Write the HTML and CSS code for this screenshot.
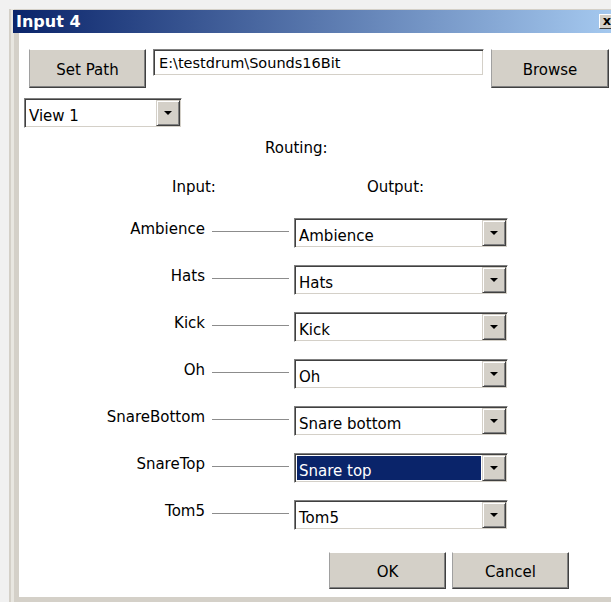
FILE: index.html
```html
<!DOCTYPE html>
<html>
<head>
<meta charset="utf-8">
<title>Input 4</title>
<link rel="stylesheet" href="styles.css">
</head>
<body>
<div class="window">
  <div class="titlebar">
    <span class="title">Input 4</span>
    <span class="close">x</span>
  </div>
  <div class="client">
    <div class="toolbar">
      <button class="btn">Set Path</button>
      <div class="field">E:\testdrum\Sounds16Bit</div>
      <button class="btn">Browse</button>
    </div>

    <div class="combo view">
      <span class="value">View 1</span>
      <span class="drop"><i class="arrow"></i></span>
    </div>

    <div class="heading">Routing:</div>

    <div class="cols">
      <span class="col-in">Input:</span>
      <span class="col-out">Output:</span>
    </div>

    <div class="routes">
      <div class="route">
        <span class="src">Ambience</span><span class="wire"></span>
        <div class="combo"><span class="value">Ambience</span><span class="drop"><i class="arrow"></i></span></div>
      </div>
      <div class="route">
        <span class="src">Hats</span><span class="wire"></span>
        <div class="combo"><span class="value">Hats</span><span class="drop"><i class="arrow"></i></span></div>
      </div>
      <div class="route">
        <span class="src">Kick</span><span class="wire"></span>
        <div class="combo"><span class="value">Kick</span><span class="drop"><i class="arrow"></i></span></div>
      </div>
      <div class="route">
        <span class="src">Oh</span><span class="wire"></span>
        <div class="combo"><span class="value">Oh</span><span class="drop"><i class="arrow"></i></span></div>
      </div>
      <div class="route">
        <span class="src">SnareBottom</span><span class="wire"></span>
        <div class="combo"><span class="value">Snare bottom</span><span class="drop"><i class="arrow"></i></span></div>
      </div>
      <div class="route">
        <span class="src">SnareTop</span><span class="wire"></span>
        <div class="combo focused"><span class="value">Snare top</span><span class="drop"><i class="arrow"></i></span></div>
      </div>
      <div class="route">
        <span class="src">Tom5</span><span class="wire"></span>
        <div class="combo"><span class="value">Tom5</span><span class="drop"><i class="arrow"></i></span></div>
      </div>
    </div>

    <div class="actions">
      <button class="btn action">OK</button>
      <button class="btn action">Cancel</button>
    </div>
  </div>
</div>
</body>
</html>
```
FILE: styles.css
```css
html, body {
  margin: 0;
  height: 100%;
  overflow: hidden;
}

body {
  background: #f1f1f1;
  font-family: "DejaVu Sans", "Liberation Sans", sans-serif;
  font-size: 15px;
  line-height: 17px;
  color: #000;
}

/* Classic window frame */
.window {
  margin: 9px 0 0 9px;
  width: 604px;
  padding: 1px 0 5px 4px;
  background: #d4d0c8;
  box-shadow: inset 2px 0 0 #d4d0c8, inset 5px 0 0 #e8e6e0;
}

.titlebar {
  height: 23px;
  display: flex;
  align-items: center;
  justify-content: space-between;
  background: linear-gradient(to right, #0a246a, #a6caf0);
}

.title {
  padding-left: 3px;
  color: #fff;
  font-weight: bold;
  font-size: 16px;
}

.close {
  width: 16px;
  height: 15px;
  margin-right: 2px;
  box-sizing: border-box;
  background: #d4d0c8;
  border: 1px solid;
  border-color: #fff #404040 #404040 #fff;
  font-weight: bold;
  font-size: 13px;
  line-height: 11px;
  text-align: center;
}

.client {
  margin-left: 6px;
  height: 564px;
  padding: 16px 0 0 5px;
  box-sizing: border-box;
  background: #fff;
}

/* Push buttons */
.btn {
  font: inherit;
  color: #000;
  background: #d4d0c8;
  box-sizing: border-box;
  border: 1px solid;
  border-color: #fff #404040 #404040 #a0a0a0;
  box-shadow: inset -1px -1px 0 #808080;
  padding: 3px 0 0;
  margin: 0;
}

.toolbar {
  display: flex;
  align-items: flex-start;
  gap: 7px;
  margin-left: 5px;
}

.toolbar .btn {
  width: 117px;
  height: 39px;
}

.toolbar .btn:last-child {
  width: 118px;
}

.field {
  width: 331px;
  height: 27px;
  box-sizing: border-box;
  border: 1px solid;
  border-color: #808080 #fff #fff #808080;
  box-shadow: inset 1px 1px 0 #404040, inset -1px -1px 0 #d4d0c8;
  padding: 5px 0 0 5px;
  font-size: 14.5px;
}

/* Drop-down lists */
.combo {
  display: flex;
  width: 214px;
  height: 30px;
  box-sizing: border-box;
  border: 1px solid;
  border-color: #808080 #fff #fff #808080;
  box-shadow: inset 1px 1px 0 #404040, inset -1px -1px 0 #d4d0c8;
  padding: 1px;
  background: #fff;
}

.combo .value {
  flex: 1;
  padding: 8px 0 0 3px;
}

.combo.focused .value {
  margin: 1px;
  padding: 7px 0 0 2px;
  background: #0a246a;
  color: #fff;
}

.drop {
  width: 24px;
  display: flex;
  align-items: center;
  justify-content: center;
  box-sizing: border-box;
  background: #d4d0c8;
  border: 1px solid;
  border-color: #d4d0c8 #404040 #404040 #d4d0c8;
  box-shadow: inset 1px 1px 0 #fff, inset -1px -1px 0 #808080;
}

.arrow {
  width: 0;
  height: 0;
  border-left: 4px solid transparent;
  border-right: 4px solid transparent;
  border-top: 4px solid #000;
}

.combo.view {
  width: 158px;
  margin-top: 10px;
}

.heading {
  margin-top: 12px;
  padding-left: 241px;
}

.cols {
  display: flex;
  margin-top: 22px;
  padding-left: 148px;
}

.col-out {
  margin-left: 151px;
}

/* Input-to-output rows */
.routes {
  display: flex;
  flex-direction: column;
  gap: 17px;
  margin-top: 22px;
}

.route {
  display: flex;
  align-items: flex-start;
}

.src {
  width: 181px;
  margin-top: 3px;
  text-align: right;
}

.wire {
  width: 77px;
  height: 1px;
  margin: 13px 5px 0 7px;
  background: #8c8c8c;
}

.actions {
  display: flex;
  gap: 6px;
  margin: 22px 0 0 305px;
}

.btn.action {
  width: 117px;
  height: 37px;
}
```
